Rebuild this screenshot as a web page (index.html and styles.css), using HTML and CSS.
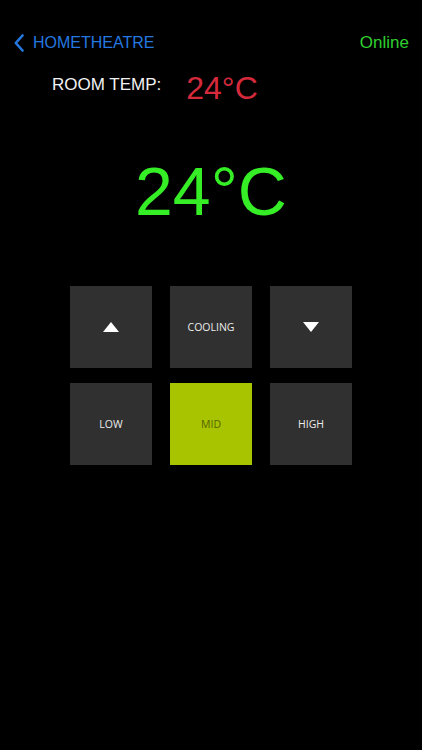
FILE: index.html
```html
<!DOCTYPE html>
<html lang="en">

<head>
    <meta charset="UTF-8" />
    <meta name="viewport" content="width=device-width, initial-scale=1.0" />
    <title>Hometheatre AC</title>
    <link rel="stylesheet" href="styles.css">
</head>

<body>
    <div class="header">
        <a class="back" href="#">
            <svg class="chevron" width="10" height="18" viewBox="0 0 10 18">
                <path d="M8.5 1.5 L1.8 9 L8.5 16.5" fill="none" stroke="#2478e0" stroke-width="2.6"
                    stroke-linecap="round" stroke-linejoin="round" />
            </svg>
            <span>HOMETHEATRE</span>
        </a>
        <div class="status">Online</div>
    </div>

    <div class="room">
        <div class="room-label">ROOM TEMP:</div>
        <div class="room-value">24°C</div>
    </div>

    <div class="target">24°C</div>

    <div class="controls">
        <button class="key" data-action="up"><span class="tri-up"></span></button>
        <button class="key" data-action="mode">COOLING</button>
        <button class="key" data-action="down"><span class="tri-down"></span></button>
        <button class="key" data-fan="low">LOW</button>
        <button class="key selected" data-fan="mid">MID</button>
        <button class="key" data-fan="high">HIGH</button>
    </div>
</body>

</html>
```

FILE: styles.css
```css
body {
    font-family: "Liberation Sans", Arial, sans-serif;
    background-color: #000;
    color: #fff;
    margin: 0;
    width: 422px;
    height: 750px;
    overflow: hidden;
}

.header {
    display: flex;
    justify-content: space-between;
    align-items: center;
    padding: 34px 13px 0 14px;
    height: 18px;
}

.back {
    display: flex;
    align-items: center;
    gap: 9px;
    color: #2478e0;
    text-decoration: none;
    font-size: 16px;
}

.chevron {
    display: block;
}

.status {
    color: #2fd12f;
    font-size: 17px;
}

.room {
    display: flex;
    align-items: flex-start;
    padding: 18px 0 0 52px;
    gap: 25px;
}

.room-label {
    font-size: 17px;
    color: #f2f2f2;
    padding-top: 5px;
}

.room-value {
    font-size: 32px;
    color: #d42a3c;
}

.target {
    text-align: center;
    font-size: 68px;
    color: #35ee26;
    margin-top: 45px;
    line-height: 78px;
}

.controls {
    display: grid;
    grid-template-columns: repeat(3, 82px);
    grid-auto-rows: 82px;
    column-gap: 18px;
    row-gap: 15px;
    justify-content: center;
    margin-top: 56px;
}

.key {
    background-color: #303030;
    color: #ececec;
    border: none;
    border-radius: 0;
    font-family: "Open Sans", sans-serif;
    font-size: 10.5px;
    padding: 0;
    display: flex;
    align-items: center;
    justify-content: center;
    cursor: pointer;
}

.selected {
    background-color: #a8c400;
    color: #556300;
}

.tri-up,
.tri-down {
    width: 0;
    height: 0;
    border-left: 8px solid transparent;
    border-right: 8px solid transparent;
}

.tri-up {
    border-bottom: 10px solid #fff;
}

.tri-down {
    border-top: 10px solid #fff;
}
```
